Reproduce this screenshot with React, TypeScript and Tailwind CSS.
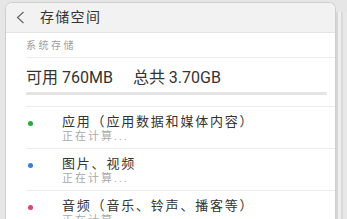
const font = { fontFamily: '"Roboto", "Noto Sans CJK SC", sans-serif' };

const items = [
  { color: "bg-[#2aa83a]", title: "应用（应用数据和媒体内容）" },
  { color: "bg-[#3b7ddf]", title: "图片、视频" },
  { color: "bg-[#e6407c]", title: "音频（音乐、铃声、播客等）" },
];

function Row({ color, title }: { color: string; title: string }) {
  return (
    <div className="flex h-[42px] shrink-0 items-start border-b border-[#ececec]">
      <span className={`mt-[14px] ml-[2px] h-[5px] w-[5px] rounded-full ${color}`} />
      <div className="ml-[29px] flex flex-col">
        <span className="mt-[6px] text-[13px] leading-[18px] tracking-[1.8px] text-[#333]">{title}</span>
        <span className="text-[11px] leading-[12px] tracking-[2px] text-[#aaa]">正在计算...</span>
      </div>
    </div>
  );
}

export default function App() {
  return (
    <div className="flex h-[219px] w-[347px] overflow-hidden bg-[#e6e6e6] pt-[2px] pl-[5px]" style={font}>
      <div className="flex flex-1 flex-col overflow-hidden rounded-t-[7px] border border-b-0 border-[#cfcfcf] bg-white">
        <div className="flex h-[30px] shrink-0 items-center border-b border-[#e3e3e3] bg-[#f2f2f2]">
          <svg className="ml-[10px] h-[13px] w-[9px]" viewBox="0 0 9 13" fill="none">
            <path d="M7.5 1 L1.5 6.5 L7.5 12" stroke="#666" strokeWidth="1.2" />
          </svg>
          <span className="ml-[15px] text-[14px] tracking-[1.3px] text-[#333]">存储空间</span>
        </div>
        <div className="ml-[20px] flex flex-col">
          <div className="flex h-[25px] shrink-0 items-center border-b border-[#ececec]">
            <span className="text-[10px] tracking-[2.5px] text-[#a0a0a0]">系统存储</span>
          </div>
          <div className="flex h-[49px] shrink-0 flex-col border-b border-[#ececec]">
            <div className="mt-[9px] flex h-[21px] items-center text-[16px] text-[#333]">
              <span>可用 760MB</span>
              <span className="ml-[20px]">总共 3.70GB</span>
            </div>
            <div className="mt-[4px] mr-[8px] h-[3px] rounded-full bg-[#e4e4e4]" />
          </div>
          {items.map((it) => (
            <Row key={it.title} color={it.color} title={it.title} />
          ))}
        </div>
      </div>
      <div className="flex w-[11px] shrink-0 pt-[10px]">
        <div className="w-[2px] bg-[#d6d6d6]" />
        <div className="w-[3px] bg-[#efefef]" />
        <div className="w-[2px] bg-[#d9d9d9]" />
        <div className="flex-1 bg-[#e8e8e8]" />
      </div>
    </div>
  );
}
